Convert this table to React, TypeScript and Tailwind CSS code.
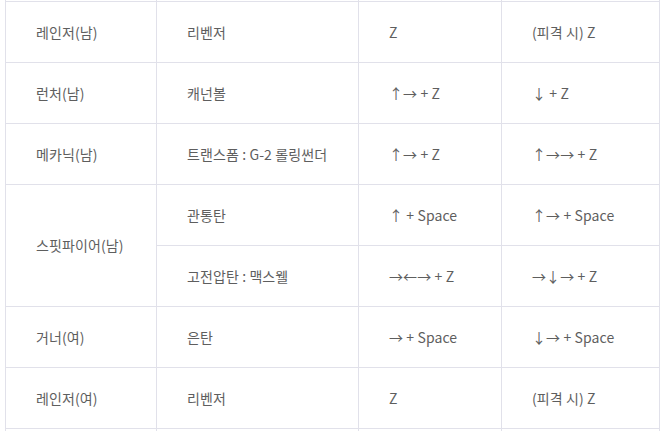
import React from "react";

const font = { fontFamily: '"Noto Sans CJK KR", "Noto Sans", sans-serif' };

function C({ text, span }: { text: string; span?: boolean }) {
  return (
    <div
      className={
        "flex items-center pl-[30px] border-r border-b border-[#e1e1ea] text-[14px] text-[#5e5e5e] tracking-[0.1px] box-border " +
        (span ? "row-span-2 h-[122px]" : "h-[61px]")
      }
    >
      {text}
    </div>
  );
}

function Blank({ h }: { h: string }) {
  return <div className={"border-r border-b border-[#e1e1ea] box-border " + h} />;
}

export default function App() {
  const rows: string[][] = [
    ["레인저(남)", "리벤저", "Z", "(피격 시) Z"],
    ["런처(남)", "캐넌볼", "↑→ + Z", "↓ + Z"],
    ["메카닉(남)", "트랜스폼 : G-2 롤링썬더", "↑→ + Z", "↑→→ + Z"],
  ];
  const rows2: string[][] = [
    ["거너(여)", "은탄", "→ + Space", "↓→ + Space"],
    ["레인저(여)", "리벤저", "Z", "(피격 시) Z"],
  ];
  return (
    <div className="w-[662px] h-[431px] overflow-hidden bg-white" style={font}>
      <div className="ml-[5px] w-[655px] border-l border-[#e1e1ea] grid grid-cols-[151px_202px_143px_158px]">
        <Blank h="h-[2px]" />
        <Blank h="h-[2px]" />
        <Blank h="h-[2px]" />
        <Blank h="h-[2px]" />
        {rows.map((r, i) => (
          <React.Fragment key={i}>
            {r.map((t, j) => (
              <C key={j} text={t} />
            ))}
          </React.Fragment>
        ))}
        <C text="스핏파이어(남)" span />
        <C text="관통탄" />
        <C text="↑ + Space" />
        <C text="↑→ + Space" />
        <C text="고전압탄 : 맥스웰" />
        <C text="→←→ + Z" />
        <C text="→↓→ + Z" />
        {rows2.map((r, i) => (
          <React.Fragment key={i}>
            {r.map((t, j) => (
              <C key={j} text={t} />
            ))}
          </React.Fragment>
        ))}
        <Blank h="h-[10px]" />
        <Blank h="h-[10px]" />
        <Blank h="h-[10px]" />
        <Blank h="h-[10px]" />
      </div>
    </div>
  );
}
